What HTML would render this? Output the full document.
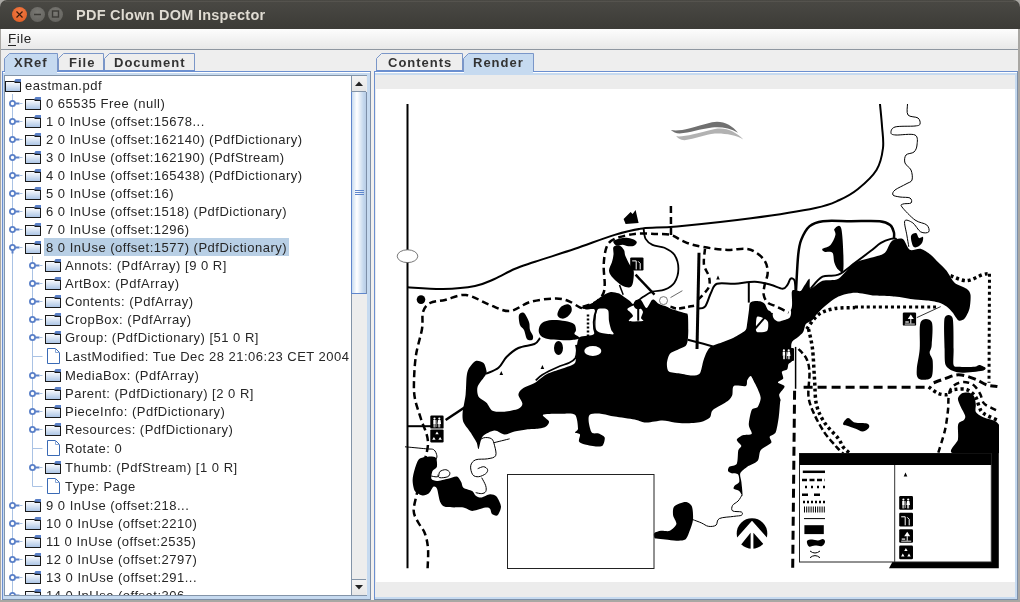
<!DOCTYPE html>
<html><head><meta charset="utf-8">
<style>
*{margin:0;padding:0;box-sizing:border-box}
html,body{width:1020px;height:602px;overflow:hidden;background:#fff;font-family:"Liberation Sans",sans-serif}
.a,.row,.tab{will-change:transform}
.a{position:absolute}
.row{position:absolute;white-space:nowrap;font-size:13px;line-height:18px;color:#262626;letter-spacing:0.5px}
.tab{position:absolute;font-weight:bold;font-size:13px;color:#333;letter-spacing:1px;white-space:nowrap}
</style></head><body>
<div class="a" style="left:0;top:0;width:1020px;height:602px;background:#a9a7a3"></div>
<div class="a" style="left:0;top:0;width:1020px;height:29px;background:linear-gradient(#4a4944,#3c3b37);border-radius:7px 7px 0 0"></div>
<div class="a" style="left:5px;top:1px;width:1010px;height:1px;background:#55534e"></div>
<div class="a" style="left:12px;top:7px;width:15px;height:15px;border-radius:50%;background:radial-gradient(circle at 50% 35%,#f47b46,#dd5a20)"></div>
<div class="a" style="left:30px;top:7px;width:15px;height:15px;border-radius:50%;background:radial-gradient(circle at 50% 35%,#7a7974,#5f5e5a)"></div>
<div class="a" style="left:48px;top:7px;width:15px;height:15px;border-radius:50%;background:radial-gradient(circle at 50% 35%,#7a7974,#5f5e5a)"></div>
<svg class="a" style="left:0;top:0" width="70" height="29">
<path d="M16.5 11.5 L22.5 17.5 M22.5 11.5 L16.5 17.5" stroke="#3a1a0a" stroke-width="1.2"/>
<line x1="34" y1="14.5" x2="41" y2="14.5" stroke="#3c3b37" stroke-width="1.5"/>
<rect x="52.5" y="11" width="6" height="6" fill="none" stroke="#3c3b37" stroke-width="1.4"/>
</svg>
<div class="a" style="left:76px;top:7px;color:#dfdbd2;font-weight:bold;font-size:14.5px;letter-spacing:0.25px;white-space:nowrap">PDF Clown DOM Inspector</div>
<div class="a" style="left:1px;top:29px;width:1017px;height:21px;background:linear-gradient(#fdfdfd,#e8e8e8);border-bottom:1px solid #8e96a0"></div>
<div class="a" style="left:8px;top:31px;font-size:13.5px;color:#222;letter-spacing:0.5px">File</div>
<div class="a" style="left:8px;top:45px;width:8px;height:1px;background:#222"></div>
<div class="a" style="left:1px;top:50px;width:1017px;height:550px;background:#eeeeee"></div>

<!-- left tabs -->
<svg class="a" style="left:58px;top:53px" width="47" height="19"><path d="M0.5 19 L0.5 5.5 L5.5 0.5 L45.5 0.5 L45.5 19" fill="#eeeeee" stroke="#7a96c8"/><line x1="0" y1="17.5" x2="46" y2="17.5" stroke="#6b8fd0"/></svg><div class="tab" style="left:68.5px;top:55px">File</div><svg class="a" style="left:104px;top:53px" width="92" height="19"><path d="M0.5 19 L0.5 5.5 L5.5 0.5 L90.5 0.5 L90.5 19" fill="#eeeeee" stroke="#7a96c8"/><line x1="0" y1="17.5" x2="91" y2="17.5" stroke="#6b8fd0"/></svg><div class="tab" style="left:114px;top:55px">Document</div><svg class="a" style="left:4px;top:53px" width="55" height="19"><path d="M0.5 19 L0.5 5.5 L5.5 0.5 L53.5 0.5 L53.5 19" fill="#c6daf0" stroke="#7a96c8"/></svg><div class="tab" style="left:14px;top:55px">XRef</div><div class="a" style="left:5px;top:71px;width:52px;height:2px;background:#c6daf0;z-index:2"></div>
<!-- left panel -->
<div class="a" style="left:2px;top:71px;width:369px;height:529px;background:#c6daf0;border-top:1px solid #6b8fd0;border-left:1px solid #6b8fd0;border-right:1px solid #7d8fa8;border-bottom:1px solid #7d8fa8"></div>
<div class="a" style="left:3px;top:72px;width:367px;height:1px;background:#fff"></div>
<div class="a" style="left:4px;top:75px;width:363px;height:521px;background:#fff;border:1px solid #8394a8"></div>
<!-- scrollbar -->
<div class="a" style="left:351px;top:76px;width:16px;height:519px;background:#ededed;border-left:1px solid #8394a8"></div>
<div class="a" style="left:352px;top:76px;width:14px;height:16px;background:linear-gradient(#f4f4f4,#e6e6e6);border-bottom:1px solid #8394a8"></div>
<svg class="a" style="left:352px;top:76px" width="14" height="16"><path d="M3 10 L7 5.5 L11 10 Z" fill="#222"/></svg>
<div class="a" style="left:351px;top:92px;width:16px;height:202px;background:linear-gradient(90deg,#c9dcf0,#ffffff 35%,#c6d9ee 80%,#b8cde6);border-left:1.5px solid #5f86cc;border-right:1px solid #7d8fa8;border-bottom:1.5px solid #5f86cc"></div>
<div class="a" style="left:355px;top:190px;width:9px;height:1px;background:#5f86cc"></div>
<div class="a" style="left:355px;top:192px;width:9px;height:1px;background:#5f86cc"></div>
<div class="a" style="left:355px;top:194px;width:9px;height:1px;background:#5f86cc"></div>
<div class="a" style="left:352px;top:579px;width:14px;height:16px;background:linear-gradient(#f4f4f4,#e6e6e6);border-top:1px solid #8394a8"></div>
<svg class="a" style="left:352px;top:579px" width="14" height="16"><path d="M3 6 L7 10.5 L11 6 Z" fill="#222"/></svg>
<!-- tree -->
<div class="a" style="left:5px;top:76px;width:346px;height:519px;overflow:hidden">
<svg class="a" style="left:-5px;top:-76px" width="351" height="602"><defs>
<linearGradient id="fg" x1="0" y1="0" x2="0" y2="1"><stop offset="0" stop-color="#ffffff"/><stop offset="1" stop-color="#a9c3e5"/></linearGradient>
<symbol id="fold" width="17" height="14" viewBox="0 0 17 14">
<rect x="0.5" y="2.5" width="15" height="10" fill="url(#fg)" stroke="#1a1a1a"/>
<path d="M9 2.5 L10.5 0 L16 0 L16 3 Z" fill="#5a80c8"/>
<line x1="9.5" y1="3.5" x2="15.5" y2="3.5" stroke="#1a1a1a"/>
</symbol>
<symbol id="file" width="14" height="17" viewBox="0 0 14 17">
<path d="M0.5 0.5 L8.5 0.5 L12.5 4.5 L12.5 15.5 L0.5 15.5 Z" fill="#fff" stroke="#3a6ab5"/>
<path d="M8.5 0.5 L8.5 4.5 L12.5 4.5" fill="none" stroke="#8aa8d8"/>
</symbol>
</defs><line x1="12.5" y1="94" x2="12.5" y2="602" stroke="#a9c2e4"/><line x1="32.5" y1="256" x2="32.5" y2="486.5" stroke="#a9c2e4"/><use href="#fold" x="5" y="79"/><line x1="15.5" y1="103.5" x2="19.5" y2="103.5" stroke="#5a80c8" stroke-width="2"/><line x1="19.5" y1="103.5" x2="22.5" y2="103.5" stroke="#a9c2e4"/><circle cx="12.5" cy="103.5" r="2.6" fill="#fff" stroke="#5a80c8" stroke-width="1.8"/><use href="#fold" x="25" y="97"/><line x1="15.5" y1="121.5" x2="19.5" y2="121.5" stroke="#5a80c8" stroke-width="2"/><line x1="19.5" y1="121.5" x2="22.5" y2="121.5" stroke="#a9c2e4"/><circle cx="12.5" cy="121.5" r="2.6" fill="#fff" stroke="#5a80c8" stroke-width="1.8"/><use href="#fold" x="25" y="115"/><line x1="15.5" y1="139.5" x2="19.5" y2="139.5" stroke="#5a80c8" stroke-width="2"/><line x1="19.5" y1="139.5" x2="22.5" y2="139.5" stroke="#a9c2e4"/><circle cx="12.5" cy="139.5" r="2.6" fill="#fff" stroke="#5a80c8" stroke-width="1.8"/><use href="#fold" x="25" y="133"/><line x1="15.5" y1="157.5" x2="19.5" y2="157.5" stroke="#5a80c8" stroke-width="2"/><line x1="19.5" y1="157.5" x2="22.5" y2="157.5" stroke="#a9c2e4"/><circle cx="12.5" cy="157.5" r="2.6" fill="#fff" stroke="#5a80c8" stroke-width="1.8"/><use href="#fold" x="25" y="151"/><line x1="15.5" y1="175.5" x2="19.5" y2="175.5" stroke="#5a80c8" stroke-width="2"/><line x1="19.5" y1="175.5" x2="22.5" y2="175.5" stroke="#a9c2e4"/><circle cx="12.5" cy="175.5" r="2.6" fill="#fff" stroke="#5a80c8" stroke-width="1.8"/><use href="#fold" x="25" y="169"/><line x1="15.5" y1="193.5" x2="19.5" y2="193.5" stroke="#5a80c8" stroke-width="2"/><line x1="19.5" y1="193.5" x2="22.5" y2="193.5" stroke="#a9c2e4"/><circle cx="12.5" cy="193.5" r="2.6" fill="#fff" stroke="#5a80c8" stroke-width="1.8"/><use href="#fold" x="25" y="187"/><line x1="15.5" y1="211.5" x2="19.5" y2="211.5" stroke="#5a80c8" stroke-width="2"/><line x1="19.5" y1="211.5" x2="22.5" y2="211.5" stroke="#a9c2e4"/><circle cx="12.5" cy="211.5" r="2.6" fill="#fff" stroke="#5a80c8" stroke-width="1.8"/><use href="#fold" x="25" y="205"/><line x1="15.5" y1="229.5" x2="19.5" y2="229.5" stroke="#5a80c8" stroke-width="2"/><line x1="19.5" y1="229.5" x2="22.5" y2="229.5" stroke="#a9c2e4"/><circle cx="12.5" cy="229.5" r="2.6" fill="#fff" stroke="#5a80c8" stroke-width="1.8"/><use href="#fold" x="25" y="223"/><line x1="15.5" y1="247.5" x2="19.5" y2="247.5" stroke="#5a80c8" stroke-width="2"/><line x1="19.5" y1="247.5" x2="22.5" y2="247.5" stroke="#a9c2e4"/><circle cx="12.5" cy="247.5" r="2.6" fill="#fff" stroke="#5a80c8" stroke-width="1.8"/><line x1="12.5" y1="249.5" x2="12.5" y2="253.5" stroke="#5a80c8" stroke-width="2"/><use href="#fold" x="25" y="241"/><rect x="44" y="238" width="245" height="18" fill="#b8cfe5"/><line x1="35.5" y1="265.5" x2="39.5" y2="265.5" stroke="#5a80c8" stroke-width="2"/><line x1="39.5" y1="265.5" x2="42.5" y2="265.5" stroke="#a9c2e4"/><circle cx="32.5" cy="265.5" r="2.6" fill="#fff" stroke="#5a80c8" stroke-width="1.8"/><use href="#fold" x="45" y="259"/><line x1="35.5" y1="283.5" x2="39.5" y2="283.5" stroke="#5a80c8" stroke-width="2"/><line x1="39.5" y1="283.5" x2="42.5" y2="283.5" stroke="#a9c2e4"/><circle cx="32.5" cy="283.5" r="2.6" fill="#fff" stroke="#5a80c8" stroke-width="1.8"/><use href="#fold" x="45" y="277"/><line x1="35.5" y1="301.5" x2="39.5" y2="301.5" stroke="#5a80c8" stroke-width="2"/><line x1="39.5" y1="301.5" x2="42.5" y2="301.5" stroke="#a9c2e4"/><circle cx="32.5" cy="301.5" r="2.6" fill="#fff" stroke="#5a80c8" stroke-width="1.8"/><use href="#fold" x="45" y="295"/><line x1="35.5" y1="319.5" x2="39.5" y2="319.5" stroke="#5a80c8" stroke-width="2"/><line x1="39.5" y1="319.5" x2="42.5" y2="319.5" stroke="#a9c2e4"/><circle cx="32.5" cy="319.5" r="2.6" fill="#fff" stroke="#5a80c8" stroke-width="1.8"/><use href="#fold" x="45" y="313"/><line x1="35.5" y1="337.5" x2="39.5" y2="337.5" stroke="#5a80c8" stroke-width="2"/><line x1="39.5" y1="337.5" x2="42.5" y2="337.5" stroke="#a9c2e4"/><circle cx="32.5" cy="337.5" r="2.6" fill="#fff" stroke="#5a80c8" stroke-width="1.8"/><use href="#fold" x="45" y="331"/><line x1="32.5" y1="356.5" x2="42.5" y2="356.5" stroke="#a9c2e4"/><use href="#file" x="47" y="348"/><line x1="35.5" y1="375.5" x2="39.5" y2="375.5" stroke="#5a80c8" stroke-width="2"/><line x1="39.5" y1="375.5" x2="42.5" y2="375.5" stroke="#a9c2e4"/><circle cx="32.5" cy="375.5" r="2.6" fill="#fff" stroke="#5a80c8" stroke-width="1.8"/><use href="#fold" x="45" y="369"/><line x1="35.5" y1="393.5" x2="39.5" y2="393.5" stroke="#5a80c8" stroke-width="2"/><line x1="39.5" y1="393.5" x2="42.5" y2="393.5" stroke="#a9c2e4"/><circle cx="32.5" cy="393.5" r="2.6" fill="#fff" stroke="#5a80c8" stroke-width="1.8"/><use href="#fold" x="45" y="387"/><line x1="35.5" y1="411.5" x2="39.5" y2="411.5" stroke="#5a80c8" stroke-width="2"/><line x1="39.5" y1="411.5" x2="42.5" y2="411.5" stroke="#a9c2e4"/><circle cx="32.5" cy="411.5" r="2.6" fill="#fff" stroke="#5a80c8" stroke-width="1.8"/><use href="#fold" x="45" y="405"/><line x1="35.5" y1="429.5" x2="39.5" y2="429.5" stroke="#5a80c8" stroke-width="2"/><line x1="39.5" y1="429.5" x2="42.5" y2="429.5" stroke="#a9c2e4"/><circle cx="32.5" cy="429.5" r="2.6" fill="#fff" stroke="#5a80c8" stroke-width="1.8"/><use href="#fold" x="45" y="423"/><line x1="32.5" y1="448.5" x2="42.5" y2="448.5" stroke="#a9c2e4"/><use href="#file" x="47" y="440"/><line x1="35.5" y1="467.5" x2="39.5" y2="467.5" stroke="#5a80c8" stroke-width="2"/><line x1="39.5" y1="467.5" x2="42.5" y2="467.5" stroke="#a9c2e4"/><circle cx="32.5" cy="467.5" r="2.6" fill="#fff" stroke="#5a80c8" stroke-width="1.8"/><use href="#fold" x="45" y="461"/><line x1="32.5" y1="486.5" x2="42.5" y2="486.5" stroke="#a9c2e4"/><use href="#file" x="47" y="478"/><line x1="15.5" y1="505.5" x2="19.5" y2="505.5" stroke="#5a80c8" stroke-width="2"/><line x1="19.5" y1="505.5" x2="22.5" y2="505.5" stroke="#a9c2e4"/><circle cx="12.5" cy="505.5" r="2.6" fill="#fff" stroke="#5a80c8" stroke-width="1.8"/><use href="#fold" x="25" y="499"/><line x1="15.5" y1="523.5" x2="19.5" y2="523.5" stroke="#5a80c8" stroke-width="2"/><line x1="19.5" y1="523.5" x2="22.5" y2="523.5" stroke="#a9c2e4"/><circle cx="12.5" cy="523.5" r="2.6" fill="#fff" stroke="#5a80c8" stroke-width="1.8"/><use href="#fold" x="25" y="517"/><line x1="15.5" y1="541.5" x2="19.5" y2="541.5" stroke="#5a80c8" stroke-width="2"/><line x1="19.5" y1="541.5" x2="22.5" y2="541.5" stroke="#a9c2e4"/><circle cx="12.5" cy="541.5" r="2.6" fill="#fff" stroke="#5a80c8" stroke-width="1.8"/><use href="#fold" x="25" y="535"/><line x1="15.5" y1="559.5" x2="19.5" y2="559.5" stroke="#5a80c8" stroke-width="2"/><line x1="19.5" y1="559.5" x2="22.5" y2="559.5" stroke="#a9c2e4"/><circle cx="12.5" cy="559.5" r="2.6" fill="#fff" stroke="#5a80c8" stroke-width="1.8"/><use href="#fold" x="25" y="553"/><line x1="15.5" y1="577.5" x2="19.5" y2="577.5" stroke="#5a80c8" stroke-width="2"/><line x1="19.5" y1="577.5" x2="22.5" y2="577.5" stroke="#a9c2e4"/><circle cx="12.5" cy="577.5" r="2.6" fill="#fff" stroke="#5a80c8" stroke-width="1.8"/><use href="#fold" x="25" y="571"/><line x1="15.5" y1="595.5" x2="19.5" y2="595.5" stroke="#5a80c8" stroke-width="2"/><line x1="19.5" y1="595.5" x2="22.5" y2="595.5" stroke="#a9c2e4"/><circle cx="12.5" cy="595.5" r="2.6" fill="#fff" stroke="#5a80c8" stroke-width="1.8"/><use href="#fold" x="25" y="589"/></svg>
<div class="a" style="left:-5px;top:-76px;width:351px;height:602px"><div class="row" style="left:25px;top:77.0px">eastman.pdf</div><div class="row" style="left:46px;top:95.0px">0 65535 Free (null)</div><div class="row" style="left:46px;top:113.0px">1 0 InUse (offset:15678...</div><div class="row" style="left:46px;top:131.0px">2 0 InUse (offset:162140) (PdfDictionary)</div><div class="row" style="left:46px;top:149.0px">3 0 InUse (offset:162190) (PdfStream)</div><div class="row" style="left:46px;top:167.0px">4 0 InUse (offset:165438) (PdfDictionary)</div><div class="row" style="left:46px;top:185.0px">5 0 InUse (offset:16)</div><div class="row" style="left:46px;top:203.0px">6 0 InUse (offset:1518) (PdfDictionary)</div><div class="row" style="left:46px;top:221.0px">7 0 InUse (offset:1296)</div><div class="row" style="left:46px;top:239.0px">8 0 InUse (offset:1577) (PdfDictionary)</div><div class="row" style="left:65px;top:257.0px">Annots: (PdfArray) [9 0 R]</div><div class="row" style="left:65px;top:275.0px">ArtBox: (PdfArray)</div><div class="row" style="left:65px;top:293.0px">Contents: (PdfArray)</div><div class="row" style="left:65px;top:311.0px">CropBox: (PdfArray)</div><div class="row" style="left:65px;top:329.0px">Group: (PdfDictionary) [51 0 R]</div><div class="row" style="left:65px;top:348.0px">LastModified: Tue Dec 28 21:06:23 CET 2004</div><div class="row" style="left:65px;top:367.0px">MediaBox: (PdfArray)</div><div class="row" style="left:65px;top:385.0px">Parent: (PdfDictionary) [2 0 R]</div><div class="row" style="left:65px;top:403.0px">PieceInfo: (PdfDictionary)</div><div class="row" style="left:65px;top:421.0px">Resources: (PdfDictionary)</div><div class="row" style="left:65px;top:440.0px">Rotate: 0</div><div class="row" style="left:65px;top:459.0px">Thumb: (PdfStream) [1 0 R]</div><div class="row" style="left:65px;top:478.0px">Type: Page</div><div class="row" style="left:46px;top:497.0px">9 0 InUse (offset:218...</div><div class="row" style="left:46px;top:515.0px">10 0 InUse (offset:2210)</div><div class="row" style="left:46px;top:533.0px">11 0 InUse (offset:2535)</div><div class="row" style="left:46px;top:551.0px">12 0 InUse (offset:2797)</div><div class="row" style="left:46px;top:569.0px">13 0 InUse (offset:291...</div><div class="row" style="left:46px;top:587.0px">14 0 InUse (offset:306...</div></div>
</div>

<!-- right tabs -->
<svg class="a" style="left:376px;top:53px" width="88" height="19"><path d="M0.5 19 L0.5 5.5 L5.5 0.5 L86.5 0.5 L86.5 19" fill="#eeeeee" stroke="#7a96c8"/><line x1="0" y1="17.5" x2="87" y2="17.5" stroke="#6b8fd0"/></svg><div class="tab" style="left:387.5px;top:55px">Contents</div><svg class="a" style="left:463px;top:53px" width="72" height="19"><path d="M0.5 19 L0.5 5.5 L5.5 0.5 L70.5 0.5 L70.5 19" fill="#c6daf0" stroke="#7a96c8"/></svg><div class="tab" style="left:473px;top:55px">Render</div><div class="a" style="left:464px;top:71px;width:69px;height:2px;background:#c6daf0;z-index:2"></div>
<!-- right panel -->
<div class="a" style="left:371px;top:71px;width:3px;height:529px;background:#f2f0ee"></div>
<div class="a" style="left:374px;top:71px;width:644px;height:529px;background:#c6daf0;border-top:1px solid #6b8fd0;border-left:1px solid #6b8fd0;border-right:1px solid #7d8fa8;border-bottom:1px solid #7d8fa8"></div>
<div class="a" style="left:375px;top:72px;width:642px;height:1px;background:#fff"></div>
<div class="a" style="left:375px;top:75px;width:640px;height:522px;background:#ececec"></div>
<div class="a" style="left:376px;top:89px;width:639px;height:493px;background:#fff"></div>
<svg class="a" style="left:0;top:0" width="1020" height="602" viewBox="0 0 1020 602"><defs><clipPath id="mapclip"><rect x="376" y="89" width="639" height="493"/></clipPath></defs><g clip-path="url(#mapclip)"><path d="M407.5 104 L407.5 568.3" fill="none" stroke="#000" stroke-width="2" stroke-linecap="butt"/><ellipse cx="407.5" cy="256.2" rx="10.3" ry="6.4" fill="#fff" stroke="#555" stroke-width="0.8"/><path d="M407.5 287.3 C413.4 287.6 431.8 289.2 443.0 289.0 C454.2 288.8 466.4 287.7 475.0 286.0 C483.6 284.3 487.9 281.8 494.5 279.0 C501.1 276.2 507.8 271.9 514.5 269.0 C521.2 266.1 524.9 265.2 535.0 261.8 C545.1 258.4 561.7 253.3 575.0 248.8 C588.3 244.3 603.4 238.3 614.7 234.9 C626.0 231.5 632.2 229.9 642.6 228.5 C653.0 227.1 658.9 228.2 677.0 226.5 C695.1 224.8 727.9 221.4 751.0 218.3 C774.1 215.2 800.8 211.1 815.5 208.0 C830.2 204.9 832.4 203.2 839.5 200.0 C846.6 196.8 851.8 194.0 858.0 189.0 C864.2 184.0 872.3 176.8 876.5 170.0 C880.7 163.2 882.1 155.3 883.0 148.0 C883.9 140.7 882.5 133.3 882.0 126.0 C881.5 118.7 880.3 107.7 880.0 104.0" fill="none" stroke="#000" stroke-width="2" stroke-linecap="butt"/><circle cx="421" cy="299.6" r="4.3" fill="#000"/><path d="M427.6 568.3 C427.7 565.0 428.5 554.3 428.0 548.4 C427.5 542.5 426.4 537.4 424.7 533.0 C423.0 528.6 419.8 525.7 418.0 522.0 C416.2 518.3 413.9 515.8 413.7 511.0 C413.5 506.2 415.6 499.8 417.0 493.0 C418.4 486.2 420.2 478.4 422.0 470.0 C423.8 461.6 428.2 451.0 428.0 442.5 C427.8 434.0 423.2 426.2 421.0 419.0 C418.8 411.8 416.2 405.3 415.0 399.0 C413.8 392.7 413.8 388.3 414.0 381.0 C414.2 373.7 414.7 363.7 416.0 355.0 C417.3 346.3 420.8 336.2 422.0 329.0 C423.2 321.8 421.7 316.3 423.0 312.0 C424.3 307.7 426.3 305.0 430.0 303.0 C433.7 301.0 439.0 301.3 445.0 300.0 C451.0 298.7 458.5 294.2 466.0 295.0 C473.5 295.8 482.7 302.3 490.0 305.0 C497.3 307.7 503.3 311.5 510.0 311.0 C516.7 310.5 522.6 304.1 530.0 302.0 C537.4 299.9 548.1 298.7 554.4 298.5 C560.7 298.3 563.6 299.2 567.8 300.7 C572.0 302.2 577.0 306.1 579.8 307.4 C582.5 308.6 583.5 308.1 584.3 308.2" fill="none" stroke="#000" stroke-width="2.5" stroke-linecap="butt" stroke-dasharray="7 4"/><path d="M407.5 426.2 L431 426.2" fill="none" stroke="#000" stroke-width="2" stroke-linecap="butt"/><path d="M445.6 420 L465.6 406.7" fill="none" stroke="#000" stroke-width="2.5" stroke-linecap="butt"/><path d="M466.6 376.8 C467.0 373.4 467.4 371.1 468.6 369.0 C469.8 366.9 473.6 361.8 475.6 361.0 C477.6 360.2 482.1 361.7 483.6 363.0 C485.1 364.3 486.2 369.4 486.5 371.0 C486.8 372.6 486.8 372.9 485.6 375.0 C484.4 377.1 478.5 383.9 477.6 386.8 C476.7 389.7 477.4 394.6 478.6 396.7 C479.8 398.8 484.6 400.8 486.5 402.7 C488.4 404.6 490.1 409.5 492.5 410.7 C494.9 411.9 501.0 412.0 504.5 411.7 C508.0 411.4 516.0 409.8 518.4 408.7 C520.8 407.6 522.4 405.6 522.4 403.7 C522.4 401.8 518.4 396.7 518.4 394.7 C518.4 392.7 520.2 390.3 522.4 388.7 C524.6 387.1 531.7 384.8 535.0 382.8 C538.3 380.8 543.5 375.8 547.0 374.0 C550.5 372.2 557.4 370.3 561.0 369.0 C564.6 367.7 572.0 365.5 574.0 364.0 C576.0 362.5 575.6 360.5 576.0 358.0 C576.4 355.5 576.5 347.8 577.0 345.0 C577.5 342.2 577.7 338.5 580.0 337.0 C582.3 335.5 592.1 336.3 594.0 334.0 C595.9 331.7 594.4 323.3 594.5 320.0 C594.6 316.7 595.6 310.9 594.5 309.5 C593.4 308.1 587.7 309.8 586.0 309.5 C584.3 309.2 580.6 308.2 581.5 307.3 C582.4 306.4 590.1 304.4 593.0 302.8 C595.9 301.2 600.7 296.6 603.1 295.2 C605.5 293.8 608.8 292.3 610.8 292.0 C612.8 291.7 616.7 292.7 618.4 293.3 C620.1 293.9 622.0 295.5 623.5 296.5 C625.0 297.5 628.6 299.9 629.9 300.9 C631.2 301.9 632.3 304.2 633.1 304.1 C633.9 304.0 634.9 300.5 636.0 300.0 C637.1 299.5 639.6 298.9 641.0 300.0 C642.4 301.1 645.1 308.0 646.5 308.0 C647.9 308.0 650.6 301.4 651.6 300.3 C652.6 299.2 653.1 299.2 654.1 299.7 C655.1 300.2 657.5 303.2 659.2 304.1 C660.9 305.0 665.2 306.0 666.9 306.7 C668.6 307.4 669.6 308.4 672.0 309.2 C674.4 310.0 682.6 312.2 684.7 313.0 C686.8 313.8 687.3 312.7 687.8 315.0 C688.3 317.3 688.3 326.7 688.3 330.0 C688.3 333.3 688.1 337.7 687.8 339.8 C687.5 341.9 687.1 344.4 685.8 345.7 C684.5 347.0 679.9 348.6 677.8 349.7 C675.7 350.8 671.4 351.8 669.9 353.7 C668.4 355.6 667.0 361.3 666.9 363.7 C666.8 366.1 667.2 370.3 668.9 371.6 C670.6 372.9 676.7 373.1 679.8 373.6 C682.9 374.1 689.1 375.6 691.8 375.6 C694.5 375.6 698.2 375.7 699.8 373.6 C701.4 371.5 702.4 363.2 703.7 359.7 C705.0 356.2 707.0 350.1 709.7 347.7 C712.4 345.3 720.5 343.1 723.7 341.8 C726.9 340.5 730.8 339.3 733.6 337.8 C736.4 336.3 743.2 332.5 745.0 330.8 C746.8 329.1 746.5 327.6 747.0 324.8 C747.5 322.0 748.6 312.9 749.0 310.0 C749.4 307.1 749.2 304.2 750.0 303.0 C750.8 301.8 753.5 301.2 755.0 301.0 C756.5 300.8 759.6 301.0 760.9 301.4 C762.2 301.8 764.0 302.9 764.9 304.0 C765.8 305.1 766.9 308.8 768.0 310.0 C769.1 311.2 769.8 313.0 772.8 313.0 C775.8 313.0 788.3 312.8 790.8 310.0 C793.3 307.2 791.3 294.7 791.8 292.0 C792.3 289.3 793.6 290.1 794.8 290.0 C796.0 289.9 799.4 291.7 800.7 291.0 C802.0 290.3 803.5 286.6 804.7 285.0 C805.9 283.4 808.7 278.2 809.5 278.7 C810.3 279.2 808.8 288.4 810.5 288.7 C812.2 289.0 818.8 282.0 822.5 280.7 C826.2 279.4 834.1 281.1 838.4 278.7 C842.7 276.3 850.1 265.7 855.0 262.8 C859.9 259.9 870.9 258.1 874.9 256.8 C878.9 255.5 882.6 254.9 884.9 252.8 C887.2 250.7 889.5 242.8 891.9 240.9 C894.3 239.0 900.4 237.7 902.8 238.9 C905.2 240.1 907.4 248.5 909.8 249.8 C912.2 251.1 917.9 248.1 920.7 248.8 C923.5 249.5 928.3 252.9 930.7 254.8 C933.1 256.7 936.6 260.7 938.7 262.8 C940.8 264.9 944.5 268.1 946.6 270.8 C948.7 273.5 951.9 280.3 954.6 282.7 C957.3 285.1 964.5 287.1 966.6 288.7 C968.7 290.3 970.1 292.0 970.5 294.7 C970.9 297.4 970.3 305.4 969.5 308.6 C968.7 311.8 966.1 317.0 964.6 318.6 C963.1 320.2 960.2 321.4 958.6 320.6 C957.0 319.8 954.2 314.5 952.6 312.6 C951.0 310.7 948.5 307.9 946.6 306.6 C944.7 305.3 941.4 303.4 938.7 302.6 C936.0 301.8 929.9 301.0 926.7 300.6 C923.5 300.2 919.1 300.1 914.8 299.6 C910.5 299.1 900.1 297.1 894.8 296.6 C889.5 296.1 880.2 296.1 874.9 295.6 C869.6 295.1 859.9 292.6 855.0 292.7 C850.1 292.8 842.5 294.7 838.4 296.6 C834.3 298.5 827.4 304.2 824.5 306.6 C821.6 309.0 818.1 312.8 816.5 314.6 C814.9 316.4 813.9 318.7 812.5 320.0 C811.1 321.3 807.0 322.4 805.8 324.0 C804.6 325.6 804.3 330.2 803.2 332.0 C802.1 333.8 799.2 336.1 797.8 337.3 C796.4 338.5 793.4 340.1 792.5 341.3 C791.6 342.5 791.2 344.1 791.2 346.6 C791.2 349.1 792.9 357.6 792.5 359.9 C792.1 362.2 789.2 362.7 788.5 363.9 C787.8 365.1 788.1 368.1 787.2 369.2 C786.3 370.3 782.4 370.6 781.9 371.8 C781.4 373.0 783.7 377.1 783.2 378.5 C782.7 379.9 777.7 381.4 777.9 382.5 C778.1 383.6 784.4 384.8 784.6 386.4 C784.8 388.0 779.7 392.6 779.2 394.4 C778.7 396.2 780.5 398.9 780.6 400.0 C780.7 401.1 780.4 400.1 780.1 402.4 C779.8 404.7 779.3 413.4 778.7 417.4 C778.1 421.4 776.9 429.7 775.7 432.3 C774.5 434.9 770.3 435.4 769.7 436.8 C769.1 438.2 772.4 441.0 771.2 442.8 C770.0 444.6 762.5 447.9 760.7 450.3 C758.9 452.7 759.5 458.5 757.7 460.7 C755.9 462.9 749.6 465.0 747.3 466.7 C745.0 468.4 741.1 471.2 740.3 473.3 C739.5 475.4 741.1 479.2 741.4 482.1 C741.7 485.0 742.8 494.2 742.5 495.4 C742.2 496.6 740.4 491.9 739.2 491.0 C738.0 490.1 734.3 489.5 733.7 488.8 C733.1 488.1 734.1 486.4 734.8 485.5 C735.5 484.6 738.8 483.6 739.2 482.1 C739.6 480.6 739.1 475.6 738.1 474.4 C737.1 473.2 732.8 473.7 731.5 473.3 C730.2 472.9 728.4 472.0 728.1 471.1 C727.8 470.2 728.1 467.7 729.3 466.7 C730.5 465.7 735.6 465.9 736.8 463.7 C738.0 461.5 737.7 452.7 738.3 450.3 C738.9 447.9 741.5 447.2 741.3 445.8 C741.1 444.4 736.6 441.2 736.8 439.8 C737.0 438.4 740.8 436.1 742.8 435.3 C744.8 434.5 750.9 435.2 751.7 433.8 C752.5 432.4 748.8 428.0 748.8 424.8 C748.8 421.6 750.5 412.3 751.7 409.9 C752.9 407.5 756.5 408.5 757.7 406.9 C758.9 405.3 760.7 400.3 760.7 397.9 C760.7 395.5 758.5 391.0 757.7 389.0 C756.9 387.0 755.6 384.7 754.7 383.0 C753.8 381.3 751.8 376.4 750.8 376.0 C749.8 375.6 748.0 378.7 747.3 380.0 C746.6 381.3 747.6 385.2 745.8 386.0 C744.0 386.8 735.6 384.8 733.8 386.0 C732.0 387.2 733.1 393.0 732.3 395.0 C731.5 397.0 730.4 398.9 727.8 400.9 C725.2 402.9 715.3 407.7 712.9 409.9 C710.5 412.1 711.5 415.8 709.9 417.4 C708.3 419.0 704.1 421.1 700.9 421.9 C697.7 422.7 689.5 423.2 686.0 423.3 C682.5 423.4 677.5 423.0 674.4 422.6 C671.3 422.2 666.2 420.6 662.5 420.6 C658.8 420.6 650.2 422.7 646.5 422.6 C642.8 422.5 638.8 420.4 634.6 419.6 C630.4 418.8 619.2 417.4 614.7 416.6 C610.2 415.8 604.0 414.0 600.7 413.7 C597.4 413.4 591.4 413.5 589.8 414.7 C588.2 415.9 588.5 420.2 588.8 422.6 C589.1 425.0 590.5 431.1 591.8 432.6 C593.1 434.1 597.0 432.9 598.7 433.6 C600.4 434.3 604.2 436.0 604.7 437.6 C605.2 439.2 603.7 444.3 602.7 445.5 C601.7 446.7 599.4 446.6 597.0 446.5 C594.6 446.4 587.4 445.2 585.0 444.5 C582.6 443.8 579.7 442.8 579.0 441.5 C578.3 440.2 580.5 435.8 580.0 434.6 C579.5 433.4 575.3 433.4 575.0 432.6 C574.7 431.8 578.0 431.0 578.0 428.6 C578.0 426.2 577.3 416.7 575.0 414.7 C572.7 412.7 565.3 413.7 561.0 413.7 C556.7 413.7 544.6 413.6 543.0 414.7 C541.4 415.8 548.6 420.0 549.0 421.6 C549.4 423.2 547.3 425.7 546.0 426.6 C544.7 427.5 541.6 428.2 539.0 428.6 C536.4 429.0 529.7 429.2 526.4 429.6 C523.1 430.0 517.4 430.9 514.5 431.6 C511.6 432.3 507.2 434.7 504.5 434.6 C501.8 434.5 497.4 430.3 494.5 430.6 C491.6 430.9 484.7 434.1 482.6 436.6 C480.5 439.1 479.4 448.2 478.6 449.0 C477.8 449.8 477.7 444.7 476.6 442.5 C475.5 440.3 472.3 435.3 470.6 432.6 C468.9 429.9 464.7 425.3 463.6 422.6 C462.5 419.9 462.3 416.4 462.6 412.7 C462.9 409.0 465.1 399.5 465.6 394.7 C466.1 389.9 466.2 380.2 466.6 376.8Z" fill="#000"/><path d="M597.0 310.0 C598.0 308.1 601.6 308.4 603.1 308.5 C604.6 308.6 607.4 308.7 608.2 310.4 C609.0 312.1 608.6 318.3 609.0 320.9 C609.4 323.5 610.6 328.0 611.2 329.8 C611.8 331.6 614.8 333.9 613.4 334.3 C612.0 334.7 603.0 333.4 600.7 332.8 C598.4 332.2 596.9 331.2 596.2 329.8 C595.5 328.4 595.4 325.0 595.5 322.4 C595.6 319.8 596.0 311.9 597.0 310.0Z" fill="#fff"/><path d="M627.4 309.0 C627.9 308.1 632.0 305.6 633.7 305.5 C635.4 305.4 638.8 307.1 640.0 308.0 C641.2 308.9 642.9 310.7 643.0 312.0 C643.1 313.3 641.0 316.8 641.0 318.0 C641.0 319.2 644.6 320.6 643.0 321.0 C641.4 321.4 630.3 321.7 629.0 321.0 C627.7 320.3 632.9 317.2 633.0 316.0 C633.1 314.8 630.7 312.9 630.0 312.0 C629.3 311.1 626.9 309.9 627.4 309.0Z" fill="#fff"/><path d="M757.0 317.0 C757.9 315.9 761.5 317.3 763.0 318.0 C764.5 318.7 767.5 320.3 768.0 322.0 C768.5 323.7 768.5 329.7 767.0 331.0 C765.5 332.3 758.5 332.7 757.0 332.0 C755.5 331.3 756.0 328.0 756.0 326.0 C756.0 324.0 756.1 318.1 757.0 317.0Z" fill="#fff"/><path d="M772.8 313.5 C773.2 312.0 775.2 308.6 776.8 307.5 C778.4 306.4 782.9 305.1 784.8 305.5 C786.7 305.9 790.1 308.9 790.8 310.5 C791.5 312.1 790.9 316.2 789.8 317.5 C788.7 318.8 784.4 320.0 782.8 320.5 C781.2 321.0 779.0 321.8 777.8 321.5 C776.6 321.2 774.5 319.6 773.8 318.5 C773.1 317.4 772.4 315.0 772.8 313.5Z" fill="#fff"/><ellipse cx="592.8" cy="351" rx="8.5" ry="5" fill="#fff"/><path d="M486.0 373.8 C488.1 372.8 495.1 370.6 498.5 367.8 C501.9 365.0 503.2 360.3 506.5 357.0 C509.8 353.7 513.8 350.2 518.4 348.0 C523.0 345.8 530.8 345.7 534.4 344.0 C538.0 342.3 539.1 339.0 540.0 338.0" fill="none" stroke="#000" stroke-width="2" stroke-linecap="butt"/><path d="M535.7 380.4 C536.8 379.4 538.8 376.9 542.4 374.7 C546.0 372.5 552.9 369.2 557.4 367.2 C561.9 365.2 566.3 364.2 569.3 362.7 C572.3 361.2 574.0 360.2 575.3 358.2 C576.5 356.2 576.7 353.0 576.8 350.8 C576.9 348.6 576.1 345.8 576.0 344.8" fill="none" stroke="#000" stroke-width="1.8" stroke-linecap="butt"/><path d="M597 308 C593 318 593 328 596 335" fill="none" stroke="#000" stroke-width="2" stroke-linecap="butt"/><path d="M588 314.6 L588 336" fill="none" stroke="#000" stroke-width="2.5" stroke-linecap="butt" stroke-dasharray="2 2"/><path d="M538.7 330.0 C538.9 327.8 539.8 324.7 542.0 323.0 C544.2 321.3 548.2 320.3 552.0 320.0 C555.8 319.7 561.3 320.3 565.0 321.0 C568.7 321.7 572.2 322.5 574.0 324.0 C575.8 325.5 575.9 328.3 576.0 330.0 C576.1 331.7 573.8 332.7 574.5 334.0 C575.2 335.3 580.4 337.0 580.0 338.0 C579.6 339.0 575.3 339.7 572.0 340.0 C568.7 340.3 564.0 340.2 560.0 340.0 C556.0 339.8 551.2 339.7 548.0 339.0 C544.8 338.3 542.5 337.5 541.0 336.0 C539.5 334.5 538.5 332.2 538.7 330.0Z" fill="#000"/><path d="M519.0 315.0 C519.7 313.0 522.3 311.8 524.0 313.0 C525.7 314.2 528.0 319.2 529.0 322.0 C530.0 324.8 529.3 327.7 530.0 330.0 C530.7 332.3 532.7 334.3 533.0 336.0 C533.3 337.7 533.0 339.5 532.0 340.0 C531.0 340.5 528.3 340.7 527.0 339.0 C525.7 337.3 525.2 332.3 524.0 330.0 C522.8 327.7 520.8 327.5 520.0 325.0 C519.2 322.5 518.3 317.0 519.0 315.0Z" fill="#000"/><path d="M557.4 314.9 C557.1 313.0 558.9 309.1 560.4 307.4 C561.9 305.6 564.6 304.6 566.3 304.4 C568.0 304.1 569.9 304.8 570.8 305.9 C571.7 307.0 572.1 309.4 571.6 311.2 C571.1 312.9 569.4 315.2 567.8 316.4 C566.2 317.6 563.6 318.9 561.9 318.6 C560.2 318.4 557.6 316.8 557.4 314.9Z" fill="#000"/><ellipse cx="558.5" cy="348" rx="4.5" ry="7" fill="#000"/><path d="M613.5 246.9 C614.5 245.4 617.8 244.9 619.5 245.4 C621.2 245.9 623.0 248.2 624.0 249.9 C625.0 251.7 624.4 253.4 625.4 255.9 C626.4 258.4 628.5 262.4 629.9 264.9 C631.3 267.4 633.2 267.9 633.7 270.9 C634.2 273.9 633.5 280.1 632.9 282.8 C632.3 285.5 631.6 286.8 629.9 287.3 C628.2 287.8 625.2 287.3 622.5 285.8 C619.8 284.3 615.8 280.9 613.5 278.4 C611.2 275.9 609.2 273.6 609.0 270.9 C608.8 268.1 611.2 264.6 612.0 261.9 C612.8 259.1 613.2 256.9 613.5 254.4 C613.8 251.9 612.5 248.4 613.5 246.9Z" fill="#000"/><path d="M613.5 240.9 C614.5 239.7 619.5 238.3 622.5 237.9 C625.5 237.5 629.0 238.1 631.4 238.7 C633.8 239.3 636.2 240.6 636.7 241.7 C637.2 242.8 635.8 244.7 634.4 245.4 C633.0 246.2 630.4 246.3 628.4 246.2 C626.4 246.1 624.5 244.8 622.5 244.7 C620.5 244.6 618.0 246.0 616.5 245.4 C615.0 244.8 612.5 242.2 613.5 240.9Z" fill="#000"/><path d="M619.5 285 L623.2 294.8" fill="none" stroke="#000" stroke-width="1.5" stroke-linecap="butt"/><path d="M623.6 219.0 L630.6 212.0 L632.6 214.0 L635.6 210.0 L638.6 223.0 L625.6 224.0Z" fill="#000"/><path d="M582.8 306.6 C584.8 305.9 591.5 304.6 594.8 302.6 C598.1 300.6 601.1 297.7 602.7 294.7 C604.4 291.7 604.5 289.7 604.7 284.7 C604.9 279.7 603.4 271.1 603.7 264.8 C604.0 258.5 604.9 251.1 606.7 246.8 C608.5 242.5 610.1 241.1 614.7 238.9 C619.4 236.8 628.0 234.7 634.6 233.9 C641.2 233.1 648.4 233.7 654.5 233.9 C660.6 234.1 666.4 233.7 671.0 234.9 C675.6 236.1 678.1 239.1 682.4 240.9 C686.7 242.7 689.9 244.3 697.0 245.8 C704.1 247.3 716.9 249.3 724.9 249.8 C732.9 250.3 739.8 248.5 744.8 248.8 C749.8 249.1 751.5 249.8 754.8 251.8 C758.1 253.8 762.6 257.3 764.7 260.8 C766.9 264.3 767.7 268.7 767.7 272.7 C767.7 276.7 765.4 281.0 764.7 284.7 C764.0 288.4 763.2 291.7 763.7 294.7 C764.2 297.7 765.5 300.6 767.7 302.6 C769.9 304.6 773.2 304.9 776.7 306.6 C780.2 308.3 786.6 311.6 788.6 312.6" fill="none" stroke="#000" stroke-width="2.5" stroke-linecap="butt" stroke-dasharray="7 4"/><path d="M670.9 206 L671 234.9" fill="none" stroke="#000" stroke-width="2.5" stroke-linecap="butt" stroke-dasharray="7 4"/><path d="M705.0 248.8 C704.8 251.5 703.3 260.2 704.0 264.8 C704.7 269.4 708.2 273.1 709.0 276.7 C709.8 280.3 710.0 283.7 709.0 286.7 C708.0 289.7 705.0 292.4 703.0 294.7 C701.0 297.0 698.0 299.6 697.0 300.6" fill="none" stroke="#000" stroke-width="2.5" stroke-linecap="butt" stroke-dasharray="6 4"/><path d="M643.6 228.5 C643.9 230.2 644.1 236.2 645.6 238.9 C647.1 241.6 649.4 243.4 652.5 244.9 C655.6 246.4 660.9 246.2 664.5 247.8 C668.1 249.5 672.1 251.3 674.4 254.8 C676.7 258.3 678.4 264.2 678.4 268.8 C678.4 273.4 676.7 279.2 674.4 282.7 C672.1 286.2 668.1 288.2 664.5 289.7 C660.9 291.2 656.0 290.5 652.5 291.7 C649.0 292.9 646.6 294.6 643.6 296.6 C640.6 298.6 636.1 302.4 634.6 303.6" fill="none" stroke="#000" stroke-width="1.8" stroke-linecap="butt"/><path d="M635.6 274.7 L654.5 294.7" fill="none" stroke="#000" stroke-width="2.5" stroke-linecap="butt"/><circle cx="638.2" cy="304.8" r="4.5" fill="#000"/><path d="M638.2 305 L638.2 320.7" fill="none" stroke="#000" stroke-width="2" stroke-linecap="butt"/><circle cx="663.5" cy="300.6" r="4" fill="#fff" stroke="#555" stroke-width="0.8"/><path d="M682.4 290.7 L670.5 297.6" fill="none" stroke="#444" stroke-width="0.8" stroke-linecap="butt"/><path d="M670.5 306.6 C671.8 306.9 674.4 308.8 678.4 308.6 C682.4 308.4 691.7 306.1 694.4 305.6" fill="none" stroke="#000" stroke-width="2.5" stroke-linecap="butt" stroke-dasharray="6 3"/><path d="M699 252.8 L697 349" fill="none" stroke="#000" stroke-width="3" stroke-linecap="butt"/><path d="M687.8 339.8 C690.4 340.5 699.1 342.7 703.4 343.8 C707.7 344.9 712.0 346.2 713.7 346.7" fill="none" stroke="#000" stroke-width="2" stroke-linecap="butt"/><circle cx="767.9" cy="313.9" r="3.5" fill="#000"/><path d="M767.9 313.9 L755 328.8" fill="none" stroke="#000" stroke-width="2" stroke-linecap="butt"/><path d="M697.0 308.6 C698.3 308.3 702.7 309.2 705.0 306.6 C707.3 304.0 709.0 296.5 711.0 292.7 C713.0 288.9 713.0 285.2 717.0 283.7 C721.0 282.2 728.5 284.0 734.8 283.7 C741.1 283.4 748.8 281.5 754.8 281.7 C760.8 281.9 766.1 283.5 770.7 284.7 C775.3 285.9 779.8 288.7 782.6 288.7 C785.4 288.7 786.3 286.4 787.6 284.7 C788.9 283.0 789.4 279.4 790.6 278.7 C791.8 278.0 793.8 278.4 794.6 280.7 C795.4 283.0 795.4 290.7 795.6 292.7" fill="none" stroke="#000" stroke-width="2" stroke-linecap="butt"/><path d="M748.8 282.7 L748.8 302.6" fill="none" stroke="#000" stroke-width="2" stroke-linecap="butt"/><path d="M796.0 290.7 C796.4 284.7 797.3 263.3 798.2 254.8 C799.1 246.3 799.3 244.6 801.2 239.9 C803.1 235.2 805.8 229.5 809.4 226.4 C813.0 223.3 816.0 222.1 822.9 221.2 C829.8 220.3 841.5 221.2 851.0 221.2 C860.5 221.2 873.2 220.6 879.7 221.2 C886.2 221.8 887.8 223.1 890.2 225.0 C892.6 226.9 893.3 230.2 893.9 232.4 C894.5 234.6 893.9 237.4 893.9 238.4" fill="none" stroke="#000" stroke-width="2.5" stroke-linecap="butt"/><path d="M810.5 288.7 C812.5 286.7 817.9 279.0 822.5 276.7 C827.1 274.4 833.0 277.0 838.4 274.7 C843.8 272.4 849.6 266.8 855.0 262.8 C860.4 258.8 866.6 254.1 870.9 250.8 C875.2 247.5 877.6 244.9 880.9 242.9 C884.2 240.9 888.2 239.6 890.9 238.9 C893.5 238.2 895.8 238.9 896.8 238.9" fill="none" stroke="#000" stroke-width="2" stroke-linecap="butt"/><path d="M834.4 228.9 C835.4 227.9 839.9 222.2 841.4 228.9 C842.9 235.6 843.9 262.0 843.4 268.8 C842.9 275.6 839.9 270.8 838.4 269.8 C836.9 268.8 835.4 265.6 834.4 262.8 C833.4 260.0 834.0 254.6 832.4 252.8 C830.8 251.0 826.1 252.5 824.5 251.8 C822.9 251.1 821.5 250.0 822.5 248.8 C823.5 247.7 828.4 247.2 830.5 244.9 C832.6 242.6 834.8 237.6 835.4 234.9 C836.0 232.2 833.4 229.9 834.4 228.9Z" fill="#000"/><path d="M911.0 236.0 C911.5 233.8 914.7 232.7 916.0 233.0 C917.3 233.3 917.8 237.3 919.0 238.0 C920.2 238.7 922.5 236.2 923.0 237.0 C923.5 237.8 923.0 241.3 922.0 243.0 C921.0 244.7 918.5 246.5 917.0 247.0 C915.5 247.5 914.0 247.8 913.0 246.0 C912.0 244.2 910.5 238.2 911.0 236.0Z" fill="#000"/><path d="M907.5 104.0 C907.6 105.8 906.2 112.7 908.0 115.0 C909.8 117.3 916.0 116.5 918.0 118.0 C920.0 119.5 920.5 122.7 920.0 124.0 C919.5 125.3 919.2 125.5 915.0 126.0 C910.8 126.5 899.0 125.8 895.0 127.0 C891.0 128.2 890.8 131.7 891.0 133.0 C891.2 134.3 892.0 134.7 896.0 135.0 C900.0 135.3 911.5 133.3 915.0 135.0 C918.5 136.7 917.2 142.2 917.0 145.0 C916.8 147.8 915.8 150.3 914.0 152.0 C912.2 153.7 907.5 153.2 906.0 155.0 C904.5 156.8 904.2 160.5 905.0 163.0 C905.8 165.5 909.8 167.2 911.0 170.0 C912.2 172.8 912.8 177.7 912.0 180.0 C911.2 182.3 908.8 182.3 906.0 184.0 C903.2 185.7 897.2 188.2 895.0 190.0 C892.8 191.8 892.2 193.8 893.0 195.0 C893.8 196.2 897.2 196.5 900.0 197.0 C902.8 197.5 908.2 197.0 910.0 198.0 C911.8 199.0 912.2 202.0 911.0 203.0 C909.8 204.0 904.5 203.3 903.0 204.0 C901.5 204.7 900.0 204.3 902.0 207.0 C904.0 209.7 910.9 217.0 915.0 220.0 C919.1 223.0 924.4 222.9 926.7 224.9 C929.0 226.9 929.7 230.7 928.7 231.9 C927.7 233.1 923.4 233.4 920.7 231.9 C918.1 230.4 915.4 224.7 912.8 222.9 C910.1 221.1 905.8 218.9 904.8 220.9 C903.8 222.9 906.1 230.6 906.8 234.9 C907.5 239.2 908.5 244.8 908.8 246.8" fill="none" stroke="#000" stroke-width="1" stroke-linecap="butt"/><path d="M920.7 322.0 C922.7 317.5 929.9 318.2 931.7 322.0 C933.5 325.8 932.0 339.8 931.7 344.9 C931.4 350.0 929.5 350.2 929.7 352.9 C929.9 355.6 932.4 356.9 932.7 360.9 C933.0 364.9 933.2 373.6 931.7 376.8 C930.2 380.0 926.0 379.6 923.7 379.8 C921.4 380.0 918.9 379.6 917.8 377.8 C916.6 376.0 916.5 373.6 916.8 368.8 C917.1 364.0 919.1 356.7 919.7 348.9 C920.4 341.1 918.7 326.5 920.7 322.0Z" fill="#000"/><path d="M944.6 318.0 C945.7 313.9 951.4 313.9 952.6 318.0 C953.8 322.1 953.5 342.6 953.6 348.9 C953.7 355.2 952.9 362.5 953.6 364.9 C954.3 367.3 955.8 366.5 958.6 366.8 C961.4 367.1 971.7 367.1 974.5 366.8 C977.3 366.5 978.0 364.8 979.5 364.9 C981.0 365.0 985.1 367.0 985.5 367.8 C985.9 368.6 985.6 370.1 982.5 370.8 C979.4 371.5 966.6 372.8 962.6 372.8 C958.6 372.8 954.9 371.9 952.6 370.8 C950.3 369.7 946.7 367.8 945.6 364.9 C944.5 362.0 944.7 355.2 944.6 348.9 C944.5 342.6 943.5 322.1 944.6 318.0Z" fill="#000"/><path d="M855.0 307.0 C869.0 307.0 924.8 307.0 938.7 307.0" fill="none" stroke="#000" stroke-width="3" stroke-linecap="butt" stroke-dasharray="3 3"/><path d="M950.6 275.7 C953.3 276.5 961.3 280.9 966.6 280.7 C971.9 280.5 978.7 275.9 982.5 274.7 C986.3 273.5 988.3 273.9 989.5 273.7" fill="none" stroke="#000" stroke-width="3.5" stroke-linecap="butt" stroke-dasharray="3 3"/><path d="M989.5 273.7 L989 382.8" fill="none" stroke="#000" stroke-width="3" stroke-linecap="butt" stroke-dasharray="3 3"/><path d="M806.6 329.0 C808.6 326.6 813.9 318.0 818.5 314.6 C823.1 311.2 828.3 309.8 834.4 308.6 C840.5 307.4 851.6 307.8 855.0 307.6" fill="none" stroke="#000" stroke-width="3.5" stroke-linecap="butt" stroke-dasharray="3 3"/><path d="M808.5 329.0 C809.2 332.3 811.5 340.6 812.5 348.9 C813.5 357.2 813.8 369.5 814.5 378.8 C815.2 388.1 814.8 397.4 816.5 404.7 C818.2 412.0 820.9 417.0 824.5 422.6 C828.1 428.2 835.1 434.3 838.4 438.6 C841.7 442.9 840.8 444.9 844.4 448.5 C848.0 452.1 854.1 456.4 860.0 460.0 C865.9 463.6 876.7 468.3 880.0 470.0" fill="none" stroke="#000" stroke-width="3.5" stroke-linecap="butt" stroke-dasharray="3 3"/><path d="M798.6 348.9 C799.9 350.6 804.8 354.9 806.6 358.9 C808.4 362.9 809.2 366.5 809.5 372.8 C809.8 379.1 807.7 389.7 808.5 396.7 C809.3 403.7 811.8 408.7 814.5 414.7 C817.2 420.7 821.2 427.6 824.5 432.6 C827.8 437.6 832.1 441.8 834.4 444.5 C836.7 447.2 835.8 446.4 838.4 449.0 C841.0 451.6 848.1 458.2 850.0 460.0" fill="none" stroke="#000" stroke-width="2.5" stroke-linecap="butt" stroke-dasharray="6 3"/><path d="M916.8 317.6 L940.7 306.6" fill="none" stroke="#000" stroke-width="0.8" stroke-linecap="butt"/><path d="M795.6 346.9 L795.6 388.8" fill="none" stroke="#000" stroke-width="1.5" stroke-linecap="butt"/><path d="M803.6 387.3 L928.7 387.3" fill="none" stroke="#000" stroke-width="3" stroke-linecap="butt" stroke-dasharray="9 5"/><path d="M794.6 390.7 L792.7 568.3" fill="none" stroke="#000" stroke-width="3" stroke-linecap="butt" stroke-dasharray="9 5"/><path d="M933.7 382.8 C935.5 382.1 940.5 380.1 944.6 378.8 C948.8 377.5 953.6 374.8 958.6 374.8 C963.6 374.8 969.9 377.1 974.5 378.8 C979.1 380.5 982.7 383.5 986.5 384.8 C990.3 386.1 995.6 386.1 997.4 386.4" fill="none" stroke="#000" stroke-width="3" stroke-linecap="butt" stroke-dasharray="8 4"/><path d="M928.7 386.8 C930.2 387.9 934.9 392.0 938.0 393.3 C941.1 394.6 945.1 395.1 947.3 394.6 C949.5 394.2 949.8 391.5 951.3 390.6 C952.8 389.7 954.2 389.5 956.6 389.3 C959.0 389.1 963.2 388.6 965.9 389.3 C968.5 390.0 970.7 391.8 972.5 393.3 C974.3 394.9 975.4 396.4 976.5 398.6 C977.6 400.8 978.1 404.2 979.2 406.6 C980.3 409.0 980.1 410.9 983.2 413.2 C986.3 415.5 995.5 419.3 998.0 420.5" fill="none" stroke="#000" stroke-width="3.5" stroke-linecap="butt" stroke-dasharray="3 3"/><path d="M938.3 452.7 C939.4 448.9 943.4 437.1 945.0 430.0 C946.6 422.9 947.4 415.4 948.0 410.0 C948.6 404.6 948.1 401.0 948.6 397.3 C949.1 393.6 949.5 390.4 951.3 388.0 C953.1 385.6 956.3 383.6 959.2 382.7 C962.1 381.8 965.8 382.0 968.5 382.7 C971.2 383.4 973.2 384.6 975.2 386.6 C977.2 388.6 979.0 391.7 980.5 394.6 C982.0 397.5 981.6 401.2 984.5 403.9 C987.4 406.6 995.8 409.8 998.0 411.0" fill="none" stroke="#000" stroke-width="2.5" stroke-linecap="butt" stroke-dasharray="6 4"/><path d="M998.8 424.5 L998.8 453.0 L953.4 453.0Z" fill="#000"/><path d="M952.6 453.1 C947.1 451.3 957.2 443.3 957.9 439.8 C958.6 436.3 957.7 428.8 957.9 426.5 C958.1 424.2 958.4 423.4 959.2 422.5 C960.0 421.6 963.1 420.8 963.9 419.9 C964.7 419.0 965.6 417.7 965.2 415.9 C964.8 414.1 961.6 408.9 960.6 406.6 C959.6 404.3 957.7 400.4 957.9 398.6 C958.1 396.8 960.5 394.1 961.9 393.3 C963.3 392.5 966.9 392.2 968.5 392.6 C970.1 393.0 972.9 394.5 973.9 396.0 C974.9 397.5 975.5 401.8 975.8 403.9 C976.1 406.0 974.8 410.1 975.8 411.9 C976.8 413.7 980.1 415.5 983.2 417.2 C986.3 418.9 996.7 419.7 998.8 424.5 C1000.9 429.3 1005.0 449.2 998.8 453.0 C992.6 456.8 958.1 454.9 952.6 453.1Z" fill="#000"/><rect x="999" y="395" width="16" height="60" fill="#fff"/><path d="M953.4 453.0 L998.8 453.0 L998.8 568.3 L889.0 568.3 L892.8 561.2 L991.3 561.2 L991.3 464.0 L953.4 464.0Z" fill="#000"/><path d="M855.0 422.6 C858.2 423.5 864.7 422.8 867.0 423.6 C869.3 424.4 869.7 426.3 869.0 427.6 C868.3 428.9 865.3 431.4 863.0 431.6 C860.7 431.8 857.5 429.5 855.0 428.6 C852.5 427.7 850.0 426.8 848.0 426.0 C846.0 425.2 843.0 425.3 843.0 424.0 C843.0 422.7 846.0 418.2 848.0 418.0 C850.0 417.8 851.8 421.7 855.0 422.6Z" fill="#000"/><path d="M419.2 459.0 C421.0 457.4 425.8 456.9 428.0 456.7 C430.2 456.5 434.6 456.5 435.8 457.8 C437.0 459.1 437.3 464.9 436.9 466.7 C436.5 468.5 433.2 469.4 432.5 471.0 C431.8 472.6 430.8 477.5 431.4 478.8 C432.0 480.1 434.8 481.0 437.0 481.0 C439.2 481.0 445.4 479.4 448.0 478.8 C450.6 478.2 455.0 476.2 456.8 476.6 C458.6 477.0 460.3 480.5 461.2 482.0 C462.1 483.5 461.9 486.5 463.4 487.7 C464.9 488.9 470.6 490.0 472.2 491.0 C473.8 492.0 474.3 494.5 475.5 495.4 C476.7 496.3 479.1 497.7 481.0 497.6 C482.9 497.5 487.9 494.4 490.0 494.3 C492.1 494.2 495.0 494.9 496.5 496.5 C498.0 498.1 500.9 504.0 501.0 506.5 C501.1 509.0 498.8 514.3 497.6 515.3 C496.4 516.3 493.0 514.9 492.0 514.0 C491.0 513.1 490.9 509.6 490.0 508.7 C489.1 507.8 487.9 507.3 485.5 507.6 C483.1 507.9 475.1 510.9 472.2 510.9 C469.3 510.9 466.9 508.1 463.4 507.6 C459.9 507.1 448.8 507.7 445.7 507.0 C442.6 506.3 441.4 504.4 440.2 502.0 C439.0 499.6 437.9 490.9 437.0 488.8 C436.1 486.7 434.7 486.0 433.6 486.6 C432.5 487.2 430.5 492.0 429.0 493.2 C427.5 494.4 424.4 495.7 422.5 495.4 C420.6 495.1 416.1 493.1 414.8 491.0 C413.5 488.9 412.6 482.9 412.6 480.0 C412.6 477.1 413.9 471.7 414.8 468.9 C415.7 466.1 417.4 460.6 419.2 459.0Z" fill="#000"/><path d="M654.3 533.0 C655.2 532.1 658.9 531.1 661.0 530.8 C663.1 530.5 667.7 531.7 669.8 530.8 C671.9 529.9 676.0 526.2 676.4 524.1 C676.8 522.0 673.4 517.6 673.1 515.3 C672.8 513.0 672.6 508.3 674.2 506.5 C675.8 504.7 682.9 502.0 685.3 502.0 C687.7 502.0 690.9 504.1 691.9 506.5 C692.9 508.9 693.3 516.5 693.0 519.7 C692.7 522.9 690.7 528.1 689.7 530.8 C688.7 533.5 687.1 538.3 685.3 539.6 C683.5 540.9 679.1 540.7 676.4 540.7 C673.7 540.7 668.1 539.9 665.4 539.6 C662.7 539.3 658.0 538.8 656.5 538.5 C655.0 538.2 654.6 538.1 654.3 537.4 C654.0 536.7 653.4 533.9 654.3 533.0Z" fill="#000"/><path d="M742.0 495.0 C741.4 496.0 739.7 499.3 738.1 501.0 C736.5 502.7 733.5 503.8 732.6 505.4 C731.7 507.0 731.1 509.8 732.6 510.9 C734.1 512.0 739.9 511.3 741.4 512.0 C742.9 512.7 742.7 514.6 741.4 515.3 C740.1 516.0 737.4 515.8 733.7 516.4 C730.0 517.0 722.2 517.1 719.3 518.6 C716.3 520.1 717.8 523.9 716.0 525.2 C714.2 526.5 710.7 526.7 708.3 526.3 C705.9 525.9 704.1 524.1 701.6 523.0 C699.1 521.9 694.4 520.2 693.0 519.7" fill="none" stroke="#000" stroke-width="1" stroke-linecap="butt"/><path d="M477.7 441.8 C478.7 441.1 481.4 438.3 483.7 437.8 C486.0 437.3 489.8 437.5 491.6 438.8 C493.4 440.1 493.9 443.0 494.6 445.8 C495.3 448.6 496.8 453.6 495.6 455.8 C494.4 458.0 490.9 458.1 487.6 458.8 C484.3 459.5 478.5 458.7 475.7 459.8 C472.9 460.9 471.2 463.2 470.7 465.7 C470.2 468.2 471.4 472.9 472.7 474.7 C474.0 476.5 476.5 476.9 478.7 476.7 C480.9 476.5 484.2 474.9 485.7 473.7 C487.2 472.5 487.9 470.9 487.6 469.7 C487.3 468.5 485.4 466.9 483.7 466.7 C482.0 466.5 478.7 468.4 477.7 468.7" fill="none" stroke="#000" stroke-width="1" stroke-linecap="butt"/><path d="M481.7 477.7 C482.4 479.0 485.0 483.4 485.7 485.7 C486.4 488.0 486.4 490.3 485.7 491.6 C485.0 492.9 483.4 493.4 481.7 493.6 C480.0 493.8 476.7 492.8 475.7 492.6" fill="none" stroke="#000" stroke-width="1" stroke-linecap="butt"/><path d="M493.6 442.8 C496.3 442.1 506.9 439.5 509.6 438.8" fill="none" stroke="#000" stroke-width="1" stroke-linecap="butt"/><path d="M405.0 446.8 C408.5 447.1 421.1 448.3 425.9 448.8 C430.7 449.3 432.1 448.6 433.9 449.8 C435.7 451.0 436.6 454.1 436.9 455.8 C437.2 457.5 436.1 459.1 435.9 459.8" fill="none" stroke="#000" stroke-width="1" stroke-linecap="butt"/><path d="M429.9 475.7 C431.2 475.9 436.1 477.4 437.8 476.7 C439.5 476.0 438.5 472.9 439.8 471.7 C441.1 470.5 444.1 469.5 445.8 469.7 C447.5 469.9 449.5 471.5 449.8 472.7 C450.1 473.9 449.5 475.9 447.8 476.7 C446.1 477.5 441.5 478.0 439.8 477.7 C438.1 477.4 438.1 475.2 437.8 474.7" fill="none" stroke="#000" stroke-width="1" stroke-linecap="butt"/><rect x="507.5" y="474.5" width="146.5" height="94" fill="none" stroke="#222" stroke-width="1"/><clipPath id="na"><circle cx="752" cy="533.5" r="15.3"/></clipPath><g clip-path="url(#na)" fill="#000"><path d="M734 515 L770 515 L770 541.1 L752 520.8 L734 541.1Z"/><path d="M750.6 532.8 L750.6 560 L729 560 L729 559.6Z"/><path d="M753.4 532.8 L753.4 552 L775 552 L775 557.1Z"/></g><rect x="799.5" y="453.5" width="191.8" height="108.5" fill="#fff" stroke="#222" stroke-width="1"/><rect x="799.5" y="453.5" width="191.8" height="11.5" fill="#000"/><path d="M894.7 465 L894.7 562" fill="none" stroke="#333" stroke-width="1" stroke-linecap="butt"/><path d="M802.8 471.8 L825 471.8" fill="none" stroke="#000" stroke-width="2.5" stroke-linecap="butt"/><path d="M802 480 L825 480" fill="none" stroke="#000" stroke-width="2.5" stroke-linecap="butt" stroke-dasharray="5 2.5"/><path d="M805 487 L825 487" fill="none" stroke="#000" stroke-width="2.5" stroke-linecap="butt" stroke-dasharray="2 4"/><path d="M802 494.7 L825 494.7" fill="none" stroke="#000" stroke-width="2.5" stroke-linecap="butt" stroke-dasharray="6 6"/><path d="M803 502 L825 502" fill="none" stroke="#000" stroke-width="2.5" stroke-linecap="butt" stroke-dasharray="2 2"/><path d="M804 509.5 L825 509.5" fill="none" stroke="#000" stroke-width="6" stroke-linecap="butt" stroke-dasharray="1 1.2"/><path d="M804 518.6 L825 518.6" fill="none" stroke="#000" stroke-width="1" stroke-linecap="butt"/><rect x="804.4" y="525.2" width="19.4" height="8.9" fill="#000"/><path d="M807.0 541.0 C807.5 539.8 810.2 539.6 812.0 539.5 C813.8 539.4 816.2 540.6 818.0 540.5 C819.8 540.4 821.8 538.8 823.0 539.0 C824.2 539.2 825.2 540.8 825.0 542.0 C824.8 543.2 823.7 545.4 822.0 546.0 C820.3 546.6 817.2 545.4 815.0 545.5 C812.8 545.6 810.3 547.2 809.0 546.5 C807.7 545.8 806.5 542.2 807.0 541.0Z" fill="#000"/><path d="M810 551 Q815 555 820 551 M810 557.7 Q815 553.5 820 557.7" fill="none" stroke="#000" stroke-width="1" stroke-linecap="butt"/><rect x="899.2" y="496.1" width="13.8" height="13.6" rx="1.2" fill="#000"/><rect x="899.2" y="512.8" width="13.8" height="13.6" rx="1.2" fill="#000"/><rect x="899.2" y="529.2" width="13.8" height="13.6" rx="1.2" fill="#000"/><rect x="899.2" y="545.6" width="13.8" height="13.6" rx="1.2" fill="#000"/><g transform="translate(899.2,496.6) scale(1.0)" fill="#fff"><circle cx="4.2" cy="3" r="1.1"/><rect x="3" y="4.4" width="2.4" height="4"/><rect x="3.3" y="8.2" width="0.8" height="3.6"/><rect x="4.3" y="8.2" width="0.8" height="3.6"/><rect x="6.3" y="4.4" width="0.5" height="7"/><circle cx="9" cy="3" r="1.1"/><path d="M7.8 4.4 L10.2 4.4 L10.8 8.5 L7.2 8.5Z"/><rect x="8.1" y="8.2" width="0.8" height="3.6"/><rect x="9.1" y="8.2" width="0.8" height="3.6"/></g><g transform="translate(899.2,513.3) scale(1.0)" fill="none" stroke="#fff" stroke-width="1"><path d="M2 3.5 L6 3.5 L6 12 M8 4 L10 6 L10 12"/></g><g transform="translate(899.2,529.7) scale(1.0)" fill="#fff"><path d="M8 2 L11 6.5 L5 6.5Z"/><rect x="7.5" y="6.5" width="1" height="4.5"/><rect x="2" y="11" width="10" height="0.9"/><rect x="2.5" y="8.8" width="3.5" height="1.2"/></g><g transform="translate(899.2,546.1) scale(1.0)" fill="#fff"><path d="M6.7 2 L8.4 4.8 L5 4.8Z M3.6 7.5 L5.3 10.3 L1.9 10.3Z M9.8 7.5 L11.5 10.3 L8.1 10.3Z"/></g><rect x="430.3" y="415.6" width="13.3" height="13" rx="1.2" fill="#000"/><rect x="430.3" y="429.4" width="13.3" height="13" rx="1.2" fill="#000"/><rect x="630.2" y="257.4" width="13.3" height="13" rx="1.2" fill="#000"/><rect x="780.7" y="347.9" width="13.3" height="13" rx="1.2" fill="#000"/><rect x="902.8" y="312.6" width="13.3" height="13" rx="1.2" fill="#000"/><g transform="translate(430.3,415.6) scale(1.0)" fill="#fff"><circle cx="4.2" cy="3" r="1.1"/><rect x="3" y="4.4" width="2.4" height="4"/><rect x="3.3" y="8.2" width="0.8" height="3.6"/><rect x="4.3" y="8.2" width="0.8" height="3.6"/><rect x="6.3" y="4.4" width="0.5" height="7"/><circle cx="9" cy="3" r="1.1"/><path d="M7.8 4.4 L10.2 4.4 L10.8 8.5 L7.2 8.5Z"/><rect x="8.1" y="8.2" width="0.8" height="3.6"/><rect x="9.1" y="8.2" width="0.8" height="3.6"/></g><g transform="translate(430.3,429.4) scale(1.0)" fill="#fff"><path d="M6.7 2 L8.4 4.8 L5 4.8Z M3.6 7.5 L5.3 10.3 L1.9 10.3Z M9.8 7.5 L11.5 10.3 L8.1 10.3Z"/></g><g transform="translate(630.2,257.4) scale(1.0)" fill="none" stroke="#fff" stroke-width="1"><path d="M2 3.5 L6 3.5 L6 12 M8 4 L10 6 L10 12"/></g><g transform="translate(779.7,347.4) scale(1.0)" fill="#fff"><circle cx="4.2" cy="3" r="1.1"/><rect x="3" y="4.4" width="2.4" height="4"/><rect x="3.3" y="8.2" width="0.8" height="3.6"/><rect x="4.3" y="8.2" width="0.8" height="3.6"/><rect x="6.3" y="4.4" width="0.5" height="7"/><circle cx="9" cy="3" r="1.1"/><path d="M7.8 4.4 L10.2 4.4 L10.8 8.5 L7.2 8.5Z"/><rect x="8.1" y="8.2" width="0.8" height="3.6"/><rect x="9.1" y="8.2" width="0.8" height="3.6"/></g><g transform="translate(902.8,312.6) scale(1.0)" fill="#fff"><path d="M8 2 L11 6.5 L5 6.5Z"/><rect x="7.5" y="6.5" width="1" height="4.5"/><rect x="2" y="11" width="10" height="0.9"/><rect x="2.5" y="8.8" width="3.5" height="1.2"/></g><path d="M501.3 371.0 L503.1 375.0 L499.5 375.0Z" fill="#000"/><path d="M542.4 365.0 L544.1999999999999 369.0 L540.6 369.0Z" fill="#000"/><path d="M718 275.5 L719.8 279.5 L716.2 279.5Z" fill="#000"/><path d="M905.5 472.5 L907.3 476.5 L903.7 476.5Z" fill="#000"/><path d="M670.8 130.1 C680 132 690 128 712 122.3 C722 120 732 125 738 132.7 C730 128 720 126.5 712 127.6 C700 129 690 133 679.6 133.5 C676 133.5 673 132 670.8 130.1Z" fill="#707070"/><path d="M676.2 136.3 C685 137 695 134 714.9 129.1 C726 127 736 132 743.3 139.4 C736 135 724 133 714.9 133.5 C705 134.5 695 139 684.5 140.2 C680 140 678 138 676.2 136.3Z" fill="#b2b2b2"/></g></svg>
</body></html>
